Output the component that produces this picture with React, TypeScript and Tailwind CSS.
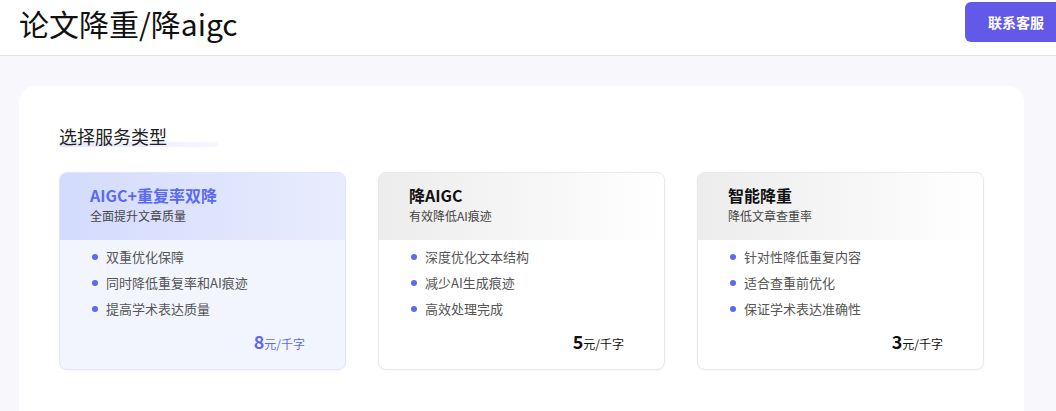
const cards = [
  {
    title: "AIGC+重复率双降",
    sub: "全面提升文章质量",
    items: ["双重优化保障", "同时降低重复率和AI痕迹", "提高学术表达质量"],
    price: "8",
    active: true,
  },
  {
    title: "降AIGC",
    sub: "有效降低AI痕迹",
    items: ["深度优化文本结构", "减少AI生成痕迹", "高效处理完成"],
    price: "5",
    active: false,
  },
  {
    title: "智能降重",
    sub: "降低文章查重率",
    items: ["针对性降低重复内容", "适合查重前优化", "保证学术表达准确性"],
    price: "3",
    active: false,
  },
];

export default function App() {
  return (
    <div className="h-[411px] w-[1056px] overflow-hidden bg-[#f8f7fc] font-['Noto_Sans_CJK_SC','Noto_Sans',sans-serif]">
      <header className="flex h-[56px] items-start border-b border-[#e2e2e6] bg-white pl-[19px]">
        <h1 className="mt-[5px] text-[30px] leading-[36px] font-normal text-[#111]">论文降重/降aigc</h1>
        <button className="mt-[2px] ml-auto mr-[-11px] h-[40px] w-[102px] rounded-[6px] bg-[#6359e9] text-[14px] font-bold text-white">
          联系客服
        </button>
      </header>

      <main className="ml-[19px] mt-[30px] w-[1005px] rounded-[16px] bg-white px-[40px] pt-[38px] pb-[60px]">
        <div className="relative inline-block">
          <div className="absolute left-0 bottom-[1px] h-[5px] w-[159px] rounded-full bg-gradient-to-r from-[#e6e8fb] to-[#f6f6fd]" />
          <h2 className="relative text-[18px] leading-[24px] font-normal text-[#222]">选择服务类型</h2>
        </div>

        <div className="mt-[23px] grid grid-cols-3 gap-[32px]">
          {cards.map((c) => (
            <div
              key={c.title}
              className={`h-[198px] overflow-hidden rounded-[8px] border ${
                c.active ? "border-[#e1e5fa] bg-[#f3f5fe]" : "border-[#e8e8ea] bg-white"
              } shadow-[0_1px_3px_rgba(0,0,0,0.04)]`}
            >
              <div
                className={`h-[67px] pl-[30px] pt-[10px] ${
                  c.active
                    ? "bg-gradient-to-r from-[#d3dbfd] to-[#e9ecfd]"
                    : "bg-gradient-to-r from-[#ececec] to-white"
                }`}
              >
                <div className={`text-[16px] leading-[24px] font-bold ${c.active ? "text-[#5b6af0]" : "text-[#111]"}`}>
                  {c.title}
                </div>
                <div className="text-[12px] leading-[17px] text-[#444]">{c.sub}</div>
              </div>
              <ul className="mt-[7px] flex flex-col gap-[6px] pl-[30px]">
                {c.items.map((it) => (
                  <li key={it} className="flex h-[20px] items-center text-[13px] text-[#555]">
                    <span className="mr-[8px] ml-[2px] h-[6px] w-[6px] rounded-full bg-[#5b6af0]" />
                    {it}
                  </li>
                ))}
              </ul>
              <div className={`mt-[10px] flex items-baseline justify-end pr-[40px] ${c.active ? "text-[#5b6af0]" : "text-[#111]"}`}>
                <span className="text-[18px] leading-[24px] font-bold">{c.price}</span>
                <span className="text-[12px]">元/千字</span>
              </div>
            </div>
          ))}
        </div>
      </main>
    </div>
  );
}
